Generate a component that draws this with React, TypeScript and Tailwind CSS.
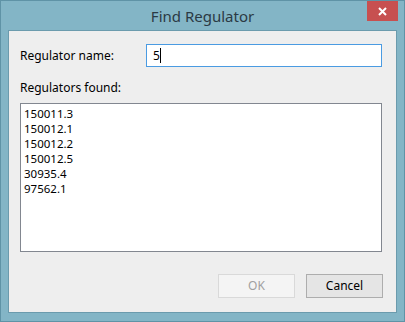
export default function App() {
  const items = ["150011.3", "150012.1", "150012.2", "150012.5", "30935.4", "97562.1"];

  return (
    <div
      className="w-[405px] h-[322px] bg-[#83b5c6] border border-[#5f93a6] flex flex-col"
      style={{ fontFamily: '"Noto Sans", "Open Sans", sans-serif' }}
    >
      {/* title bar */}
      <div className="h-[29px] flex items-start relative">
        <div className="flex-1 text-center text-[15px] leading-[20px] pt-[5px] text-[#2b3a44]">Find Regulator</div>
        <div className="absolute right-[6px] top-0 w-[31px] h-[20px] bg-[#c75050] flex items-center justify-center">
          <svg width="9" height="9" viewBox="0 0 9 9">
            <path d="M1 1L8 8M8 1L1 8" stroke="#fff" strokeWidth="2" />
          </svg>
        </div>
      </div>

      {/* client area */}
      <div className="mx-[7px] h-[283px] bg-[#eeeeee] border border-[#6b9bad] flex flex-col text-[12px] text-black">
        <div className="flex items-center mt-[13px] pl-[11px]">
          <span className="w-[126px] leading-[16px]">Regulator name:</span>
          <div className="w-[236px] h-[23px] bg-white border border-[#4a9be2] flex items-center pl-[6px]">
            <span className="leading-[16px]">5</span>
            <span className="w-px h-[15px] bg-black" />
          </div>
        </div>
        <div className="pl-[11px] mt-[13px] leading-[16px]">Regulators found:</div>
        <div className="ml-[11px] mt-[7px] w-[362px] h-[149px] bg-white border border-[#828790] pl-[3px] pt-[2px] flex flex-col">
          {items.map((it) => (
            <div key={it} className="h-[15px] leading-[15px] text-[11.5px]">{it}</div>
          ))}
        </div>
        <div className="flex justify-end gap-[11px] mt-[22px] pr-[13px]">
          <div className="w-[77px] h-[24px] border border-[#d9d9d9] bg-[#f4f4f4] text-[#a0a0a0] flex items-center justify-center">
            OK
          </div>
          <div className="w-[77px] h-[24px] border border-[#adadad] bg-[#e5e5e5] flex items-center justify-center">
            Cancel
          </div>
        </div>
      </div>
    </div>
  );
}
